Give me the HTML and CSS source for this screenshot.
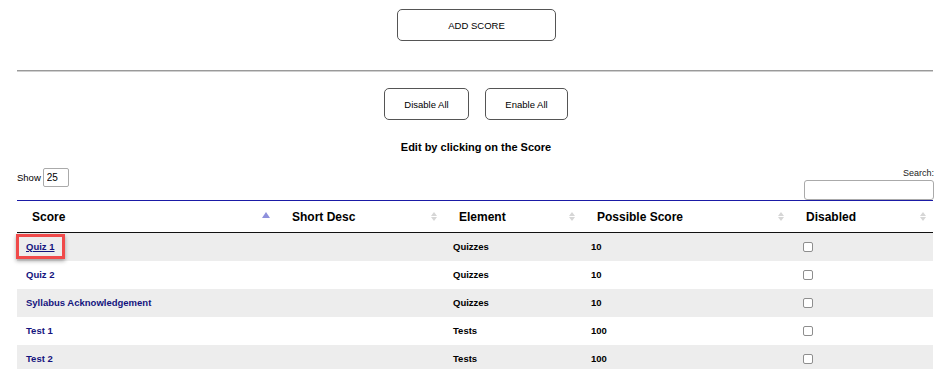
FILE: index.html
```html
<!DOCTYPE html>
<html>
<head>
<meta charset="utf-8">
<link rel="stylesheet" href="styles.css">
</head>
<body>
<div class="page">
  <div class="top">
    <button class="btn btn-add">ADD SCORE</button>
  </div>
  <div class="divider"></div>
  <div class="toggles">
    <button class="btn btn-small btn-disable">Disable All</button>
    <button class="btn btn-small btn-enable">Enable All</button>
  </div>
  <p class="title">Edit by clicking on the Score</p>
  <div class="controls">
    <label class="show">Show <input class="show-input" type="text" value="25"></label>
    <label class="search">Search:<input class="search-input" type="text"></label>
  </div>
  <table class="grid">
    <colgroup>
      <col class="c1"><col class="c2"><col class="c3"><col class="c4"><col class="c5">
    </colgroup>
    <thead>
      <tr>
        <th><div class="th-in"><span>Score</span><span class="sort-asc"></span></div></th>
        <th><div class="th-in"><span>Short Desc</span><span class="sort-both"><i class="up"></i><i class="down"></i></span></div></th>
        <th><div class="th-in"><span>Element</span><span class="sort-both"><i class="up"></i><i class="down"></i></span></div></th>
        <th><div class="th-in"><span>Possible Score</span><span class="sort-both"><i class="up"></i><i class="down"></i></span></div></th>
        <th><div class="th-in"><span>Disabled</span><span class="sort-both"><i class="up"></i><i class="down"></i></span></div></th>
      </tr>
    </thead>
    <tbody>
      <tr class="odd">
        <td><a class="link link-hl" href="#">Quiz 1</a></td><td></td><td>Quizzes</td><td>10</td><td><input class="chk" type="checkbox"></td>
      </tr>
      <tr>
        <td><a class="link" href="#">Quiz 2</a></td><td></td><td>Quizzes</td><td>10</td><td><input class="chk" type="checkbox"></td>
      </tr>
      <tr class="odd">
        <td><a class="link" href="#">Syllabus Acknowledgement</a></td><td></td><td>Quizzes</td><td>10</td><td><input class="chk" type="checkbox"></td>
      </tr>
      <tr>
        <td><a class="link" href="#">Test 1</a></td><td></td><td>Tests</td><td>100</td><td><input class="chk" type="checkbox"></td>
      </tr>
      <tr class="odd">
        <td><a class="link" href="#">Test 2</a></td><td></td><td>Tests</td><td>100</td><td><input class="chk" type="checkbox"></td>
      </tr>
    </tbody>
  </table>
</div>
</body>
</html>
```

FILE: styles.css
```css
* { box-sizing: border-box; }
html, body { margin: 0; padding: 0; background: #fff; }
body {
  font-family: "Liberation Sans", Arial, sans-serif;
  color: #000;
  overflow: hidden;
}
.page {
  margin: 0 16px 0 17px;
}
.top {
  display: flex;
  justify-content: center;
  padding-top: 9px;
  padding-left: 3px;
}
.btn {
  font-family: "Liberation Sans", Arial, sans-serif;
  font-size: 9.5px;
  color: #000;
  background: #fff;
  border: 1px solid #555;
  border-radius: 5px;
  height: 32px;
  padding: 0;
  cursor: pointer;
}
.btn-add { width: 159px; }
.divider {
  margin-top: 29px;
  height: 2px;
  border-top: 1px solid #9a9a9a;
  border-bottom: 1px solid #cfcfcf;
}
.toggles {
  display: flex;
  justify-content: center;
  gap: 16px;
  margin-top: 16px;
  padding-left: 2px;
}
.btn-disable { width: 85px; }
.btn-enable { width: 83px; }
.title {
  margin: 21px 0 0;
  text-align: center;
  font-size: 11px;
  font-weight: bold;
  line-height: 13px;
  padding-left: 2px;
}
.controls {
  display: flex;
  justify-content: space-between;
  margin-top: 14px;
  height: 32px;
}
.show {
  font-size: 9.5px;
  display: flex;
  align-items: center;
  gap: 2px;
  height: 19px;
}
.show-input {
  width: 26px;
  height: 19px;
  border: 1px solid #aaa;
  border-radius: 2px;
  font-family: "Liberation Sans", Arial, sans-serif;
  font-size: 10px;
  padding: 0 3px;
  margin: 0;
}
.search {
  font-size: 9px;
  color: #222;
  display: flex;
  flex-direction: column;
  align-items: flex-end;
  margin-right: -1px;
  line-height: 11px;
}
.search-input {
  width: 130px;
  height: 21px;
  border: 1px solid #aaa;
  border-radius: 3px;
  margin: 1px 0 0;
  padding: 0;
}
.grid {
  width: 916px;
  border-collapse: collapse;
  table-layout: fixed;
  border-top: 1px solid #1a1aa6;
}
.c1 { width: 260px; }
.c2 { width: 167px; }
.c3 { width: 138px; }
.c4 { width: 209px; }
.c5 { width: 142px; }
.grid th {
  height: 32px;
  padding: 0 6px 0 15px;
  font-size: 12px;
  font-weight: bold;
  text-align: left;
  border-bottom: 1px solid #111;
}
.th-in {
  display: flex;
  justify-content: space-between;
  align-items: center;
}
.sort-asc {
  width: 0; height: 0;
  border-left: 4px solid transparent;
  border-right: 4px solid transparent;
  border-bottom: 6px solid #8e90dc;
  margin-top: -4px;
  margin-right: 1px;
}
.sort-both {
  display: flex;
  flex-direction: column;
  gap: 1px;
  margin-right: 1px;
}
.sort-both i {
  display: block;
  width: 0; height: 0;
  border-left: 3px solid transparent;
  border-right: 3px solid transparent;
}
.sort-both .up { border-bottom: 4px solid #d6d6d6; }
.sort-both .down { border-top: 4px solid #d6d6d6; }
.grid td {
  height: 28px;
  padding: 0 0 0 9px;
  font-size: 9.5px;
  font-weight: bold;
}
.grid tr.odd td { background: #ededed; }
.link {
  color: #14147e;
  text-decoration: none;
}
.link-hl {
  position: relative;
  text-decoration: underline;
}
.link-hl::after {
  content: "";
  position: absolute;
  left: -10px;
  right: -10px;
  top: -7px;
  bottom: -7px;
  border: 3px solid #f04a4a;
  box-shadow: 0 2px 4px rgba(0,0,0,0.35);
}
.chk {
  appearance: none;
  -webkit-appearance: none;
  display: inline-block;
  width: 10px;
  height: 10px;
  margin: 0 0 0 3px;
  border: 1px solid #8e8e8e;
  border-radius: 2px;
  background: #fff;
  vertical-align: middle;
}
```
